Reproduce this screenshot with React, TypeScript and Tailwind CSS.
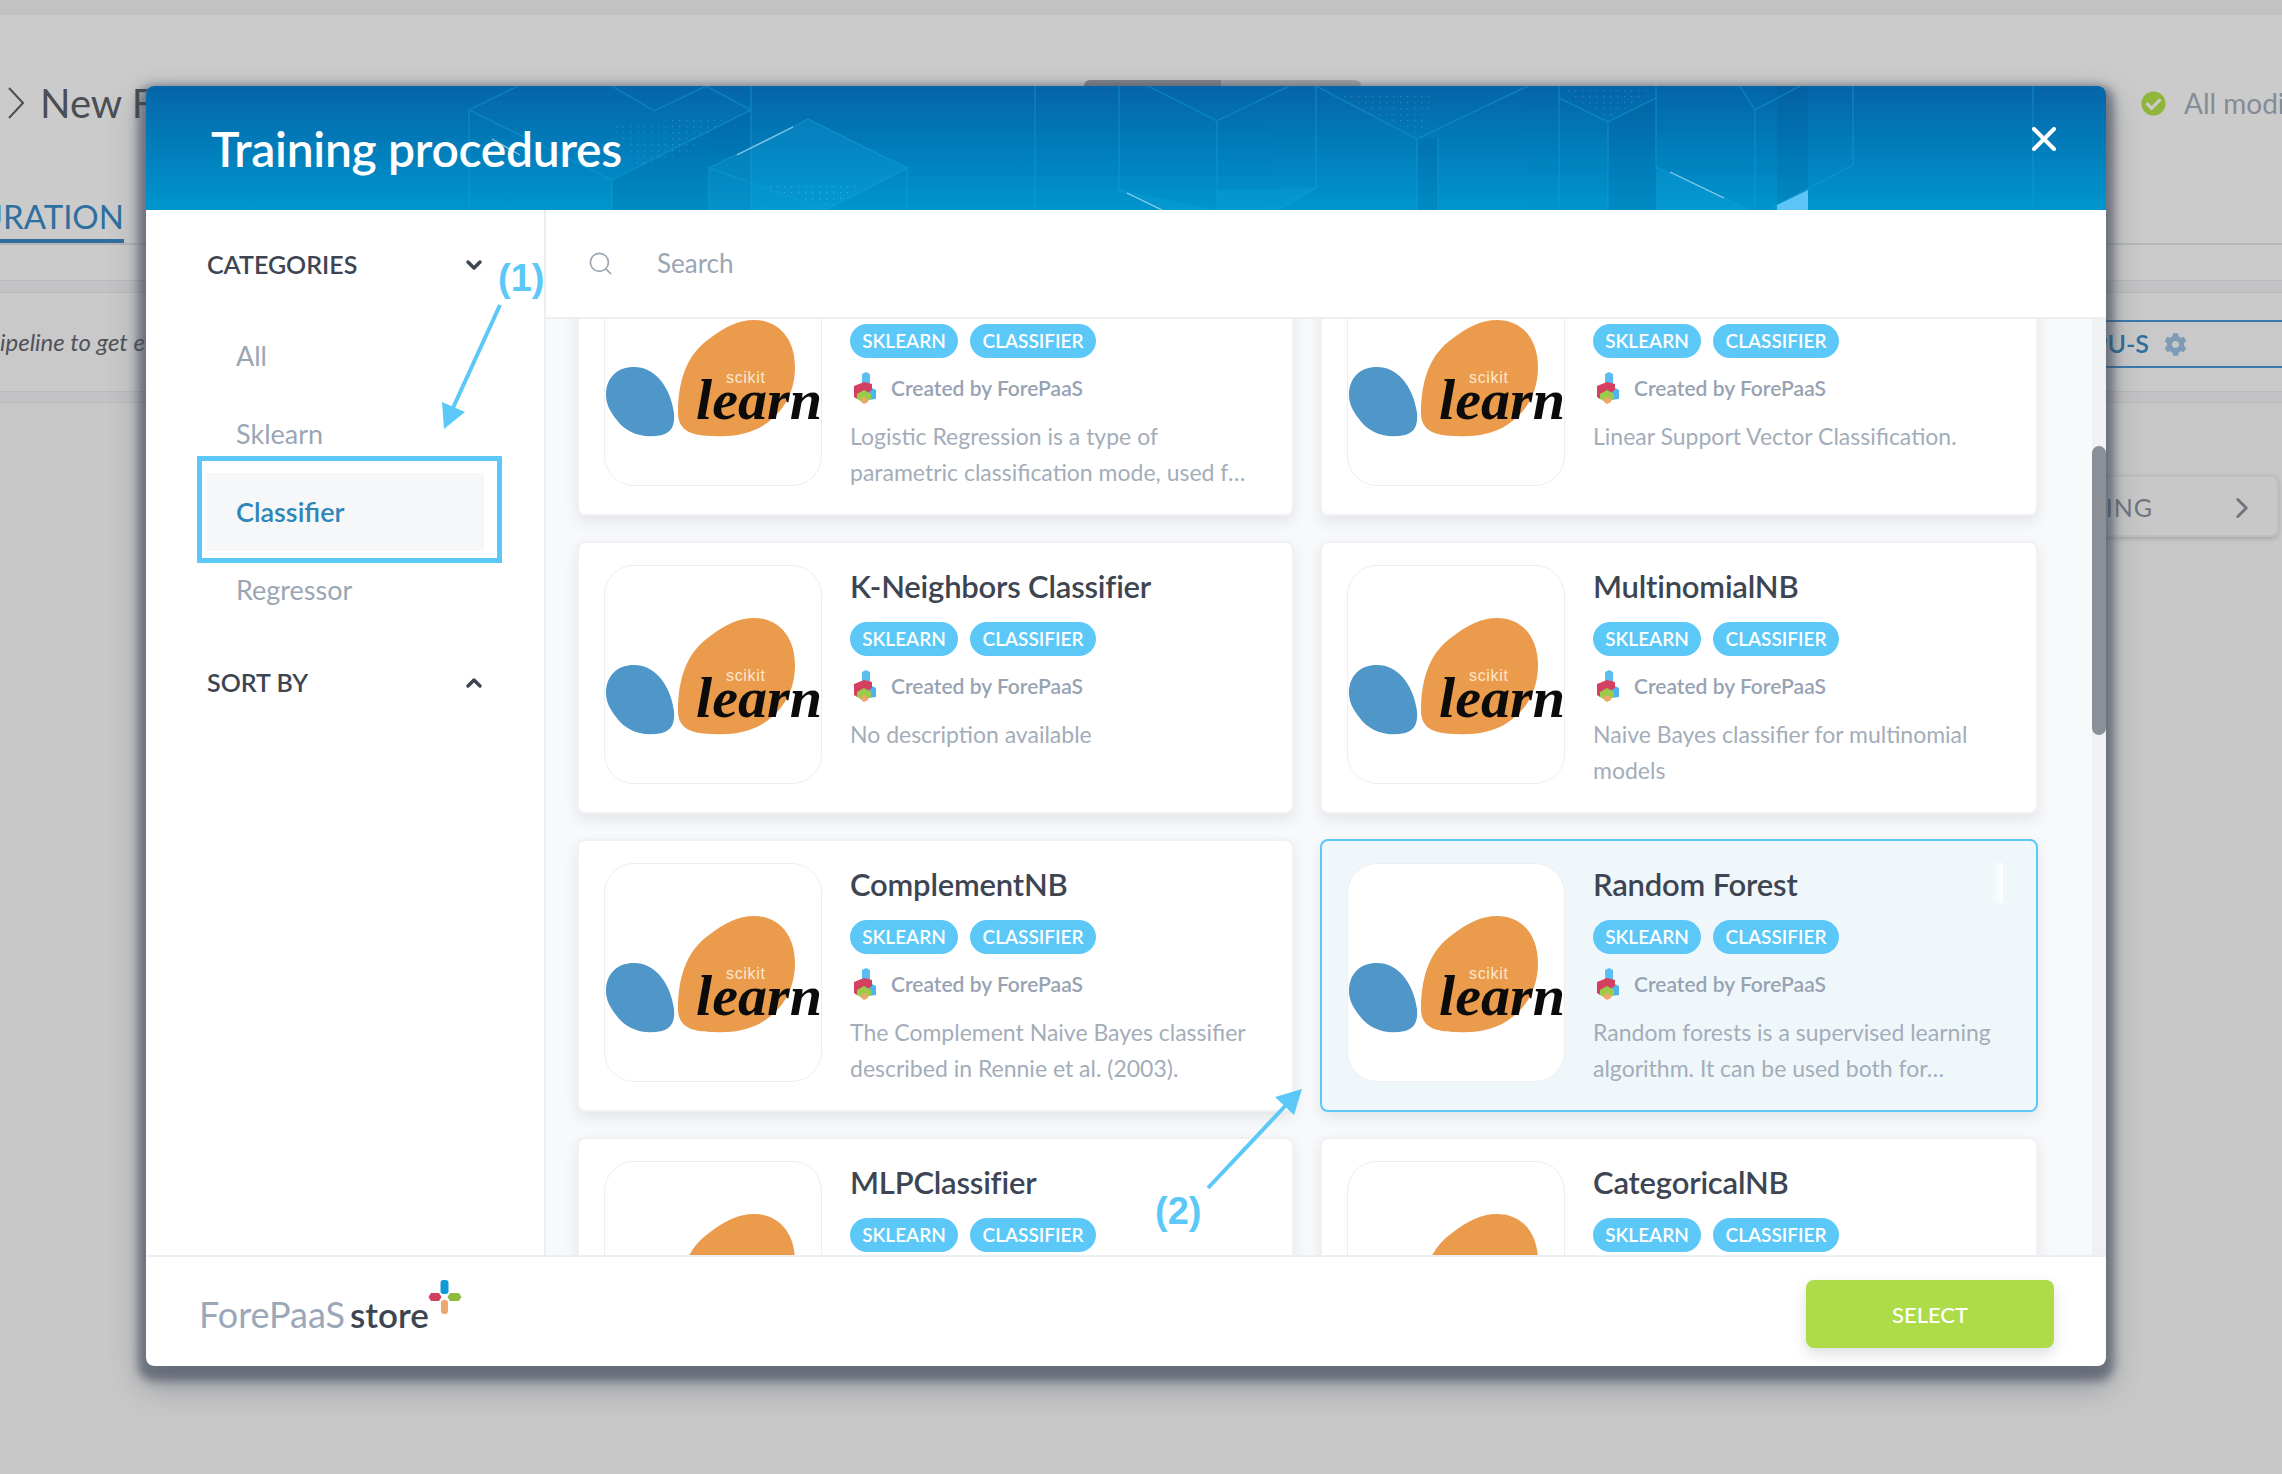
import { Search, ChevronDown, ChevronUp, ChevronRight } from "lucide-react";
import { FaCheckCircle, FaCog } from "react-icons/fa";

const cards = [
  { title: "Logistic Regression", desc: ["Logistic Regression is a type of", "parametric classification mode, used f…"] },
  { title: "Linear SVC", desc: ["Linear Support Vector Classification."] },
  { title: "K-Neighbors Classifier", desc: ["No description available"] },
  { title: "MultinomialNB", desc: ["Naive Bayes classifier for multinomial", "models"] },
  { title: "ComplementNB", desc: ["The Complement Naive Bayes classifier", "described in Rennie et al. (2003)."] },
  { title: "Random Forest", desc: ["Random forests is a supervised learning", "algorithm. It can be used both for…"], selected: true },
  { title: "MLPClassifier", desc: [] },
  { title: "CategoricalNB", desc: [] },
];

const SklearnLogo = () => (
  <svg width="218" height="219" viewBox="0 0 218 219" className="block">
    <path d="M2 128C2 110 14 100 30 100C50 100 66 118 70 146C71 158 68 165 58 168C38 172 22 166 12 152C5 143 2 136 2 128Z" fill="#5097c9" />
    <path d="M74 146C74 110 85 86 105 72C120 60 135 53 150 53C175 53 191 72 191 100C191 125 180 145 160 158C145 168 125 170 110 169C90 169 74 165 74 146Z" fill="#ea9c4c" />
    <text x="122" y="116" fontSize="16" fill="#fbe6d0" textLength="39" fontFamily="Liberation Sans, sans-serif">scikit</text>
    <text x="92" y="152" fontSize="58" fontStyle="italic" fontWeight="700" fill="#0b0b0b" textLength="126" lengthAdjust="spacingAndGlyphs" fontFamily="Liberation Serif, serif">learn</text>
  </svg>
);

const PaasIcon = () => (
  <svg width="23" height="32" viewBox="0 0 23 32">
    <polygon points="8,2 12,0 16,2 16,13 8,13" fill="#5cbdf0" />
    <polygon points="14,18 18,16 22,18 22,27 14,28" fill="#4fb4ec" />
    <polygon points="0,14 10,10 18,12 18,18 12,22 3,27 0,25" fill="#d4405f" />
    <polygon points="3,22 10,18 17,22 17,27 10,31 3,27" fill="#9ccb4a" />
    <polygon points="7,27 10,25 14,27 14,30 10,32 7,30" fill="#eda76a" />
  </svg>
);

const StoreIcon = () => (
  <svg width="34" height="34" viewBox="0 0 34 34" className="-ml-px">
    <rect x="12.5" y="0" width="8" height="14" rx="3" fill="#0f9ad6" />
    <polygon points="3,13 11,13 13.5,17 11,21 3,21 0.5,17" fill="#d33f5e" />
    <polygon points="22,13 31,13 33.5,17 31,21 22,21 19.5,17" fill="#8fbb3f" />
    <rect x="13" y="20" width="7" height="14" rx="3" fill="#efa86c" />
  </svg>
);

const HeaderArt = () => (
  <svg width="1960" height="124" viewBox="146 86 1960 124" className="absolute inset-0">
    <defs>
      <pattern id="dots" width="7" height="6" patternUnits="userSpaceOnUse">
        <rect width="1.2" height="1.2" fill="#ffffff" opacity="0.45" />
      </pattern>
    </defs>
    <g fill="#03447f" opacity="0.12">
      <polygon points="612,180 751,110 751,210 612,210" />
      <rect x="1417" y="139" width="21" height="71" />
      <polygon points="1608,122 1656,98 1656,210 1608,210" />
      <rect x="1777" y="86" width="31" height="124" />
    </g>
    <g fill="#19b2ea" opacity="0.18">
      <polygon points="808,119 907,168 826,210 709,168" />
      <polygon points="709,168 826,210 709,210" />
      <polygon points="1119,190 1217,210 1162,210" />
      <polygon points="1217,190 1316,188 1278,210 1217,210" />
      <polygon points="1656,167 1750,210 1656,210" />
    </g>
    <g fill="none" stroke="#1aa3dc" strokeOpacity="0.4" strokeWidth="1.5">
      <path d="M518 86L469 110L612 180L751 110L706 86L654 111L612 86M469 110V210M612 180V210M751 86V210" />
      <path d="M709 210V168L808 119L907 168V210M709 168L826 210L907 168" />
      <path d="M1035 86V210" />
      <path d="M1119 86V190L1162 210M1148 86L1217 121L1289 86M1217 121V210M1316 86V188L1278 210" />
      <path d="M1316 86L1417 139L1528 86M1417 139V210M1438 139V210" />
      <path d="M1559 86V210M1559 98L1608 122L1656 98M1608 122V210M1656 86V167L1750 210" />
      <path d="M1755 110V210M1853 86V165L1768 210M1740 86L1755 110L1800 86" />
      <path d="M2033 86V210" />
    </g>
    <polygon points="1777,205 1808,190 1808,210 1777,210" fill="#5cc4f6" />
    <g stroke="#ffffff" strokeOpacity="0.55" strokeWidth="1.2">
      <path d="M492 139L520 155" />
      <path d="M737 155L793 127" />
      <path d="M1127 193L1162 210" />
      <path d="M1670 172L1724 198" />
    </g>
    <polygon points="612,125 735,115 690,150 640,170" fill="url(#dots)" opacity="0.4" />
    <polygon points="1330,92 1436,92 1420,136" fill="url(#dots)" opacity="0.4" />
    <polygon points="1562,90 1652,90 1608,120" fill="url(#dots)" opacity="0.4" />
    <polygon points="760,185 860,185 830,208" fill="url(#dots)" opacity="0.5" />
  </svg>
);

const Card = ({ title, desc, selected }: { title: string; desc: string[]; selected?: boolean }) => (
  <div className={`h-[273px] rounded-lg border-2 pl-[25px] pt-[22px] flex shadow-[0_6px_14px_rgba(50,60,80,0.1)] ${selected ? "border-[#5cc8f8] bg-[#f0f7fb]" : "border-[#f0f1f4] bg-white"}`}>
    <div className="w-[218px] h-[219px] rounded-[30px] border border-[#eceef1] bg-white overflow-hidden shrink-0">
      <div className="-m-px">
        <SklearnLogo />
      </div>
    </div>
    <div className="ml-[28px] flex-1 relative">
      <div className="h-[42px] leading-[42px] text-[31px] font-semibold text-[#3e4552] tracking-[-0.2px]">{title}</div>
      <div className="flex gap-[12px] mt-[15px]">
        <span className="h-[34px] w-[108px] rounded-full bg-[#5cc8f8] text-white text-[19px] font-semibold flex items-center justify-center">SKLEARN</span>
        <span className="h-[34px] w-[126px] rounded-full bg-[#5cc8f8] text-white text-[19px] font-semibold flex items-center justify-center">CLASSIFIER</span>
      </div>
      <div className="flex items-center mt-[14px] ml-[4px] h-[32px]">
        <PaasIcon />
        <span className="ml-[14px] text-[21px] font-semibold text-[#97a3b3]">Created by ForePaaS</span>
      </div>
      <div className="mt-[14px] text-[23px] leading-[36px] text-[#a3adba] whitespace-nowrap">
        {desc.map((line) => (
          <div key={line}>{line}</div>
        ))}
      </div>
      {selected && <div className="absolute right-[33px] top-0 w-[12px] h-[40px] bg-gradient-to-r from-transparent to-white" />}
    </div>
  </div>
);

export default function App() {
  return (
    <div className="relative w-[2282px] h-[1474px] overflow-hidden bg-[#c8c8c8] font-[Lato,sans-serif]">
      {/* page behind the modal */}
      <div className="h-[15px] bg-[#c2c2c2]" />
      <div className="h-[176px] flex items-center bg-[#cbcbcb]">
        <div className="w-[1084px] shrink-0 flex items-center text-[#4a4e55] whitespace-nowrap overflow-hidden">
          <svg width="18" height="34" viewBox="0 0 18 34" className="ml-[7px] shrink-0">
            <path d="M2 2L16 17L2 32" fill="none" stroke="#4a4e55" strokeWidth="2" />
          </svg>
          <span className="text-[40px] ml-[15px]">New Forecast model</span>
        </div>
        <div className="self-start mt-[65px] w-[277px] h-[6px] shrink-0 flex rounded-t-lg overflow-hidden">
          <div className="w-[137px] bg-[#83878d]" />
          <div className="flex-1 bg-[#a5a7ab]" />
        </div>
        <div className="ml-[780px] shrink-0 flex items-center whitespace-nowrap text-[28px] text-[#858c96]">
          <FaCheckCircle size={25} className="text-[#8fb63b]" />
          <span className="ml-[18px]">All modifications</span>
        </div>
      </div>
      <div className="h-[54px] border-b-2 border-[#b5b7ba] bg-[#cbcbcb]">
        <div className="h-[52px] w-[124px] border-b-[4px] border-[#2f6f9f] flex justify-end overflow-hidden">
          <span className="shrink-0 text-[33px] leading-[50px] text-[#2f6f9f]">CONFIGURATION</span>
        </div>
      </div>
      <div className="h-[35px] bg-[#cbcbcb]" />
      <div className="h-[13px] bg-[#c3c3c5] border-y border-[#b8babd]" />
      <div className="h-[98px] pt-[4px] flex items-center justify-between bg-[#c9c9c9]">
        <span className="-mt-[4px] text-[24px] italic text-[#4f5359] whitespace-nowrap">ipeline to get everything</span>
        <div className="w-[400px] h-[48px] border-y-2 border-[#3a79a8] flex items-center justify-end pr-[95px] text-[25px] font-semibold text-[#2f6f9f]">
          CPU-S
          <FaCog size={23} className="ml-[15px] text-[#7f9ab5]" />
        </div>
      </div>
      <div className="h-[12px] bg-[#c3c3c5] border-y border-[#b8babd]" />
      <div className="flex justify-end pt-[72px] pr-[3px]">
        <div className="w-[400px] h-[62px] rounded-lg border-2 border-[#bdbfc1] flex items-center justify-end text-[25px] tracking-[1px] text-[#6f757d] shadow-[0_2px_4px_rgba(90,95,100,0.3)]">
          <span className="mt-[3px]">TRAINING</span>
          <ChevronRight size={34} strokeWidth={2} className="mt-[3px] ml-[72px] mr-[18px] text-[#6f757d]" />
        </div>
      </div>

      {/* modal */}
      <div className="absolute left-[146px] top-[86px] w-[1960px] h-[1280px] rounded-lg bg-white flex flex-col overflow-hidden">
        <div className="relative h-[124px] shrink-0 bg-gradient-to-b from-[#0565a8] to-[#0096cd]">
          <HeaderArt />
          <div className="relative h-full flex items-center justify-between pl-[65px] pr-[50px]">
            <h1 className="text-[48px] font-semibold text-white mt-[2px] tracking-[-0.3px]">Training procedures</h1>
            <svg width="24" height="24" viewBox="0 0 24 24" className="-mt-[18px]">
              <path d="M2 2L22 22M22 2L2 22" stroke="#ffffff" strokeWidth="4" strokeLinecap="round" />
            </svg>
          </div>
        </div>
        <div className="flex-1 flex min-h-0">
          <aside className="w-[400px] shrink-0 border-r-2 border-[#eceef2] pl-[61px] pt-[35px]">
            <div className="w-[277px]">
              <div className="h-[40px] flex items-center justify-between text-[25px] font-semibold text-[#3e4552]">
                CATEGORIES
                <ChevronDown size={24} strokeWidth={3.5} className="-mr-[2px]" />
              </div>
              <div className="mt-[32px] text-[27px] text-[#9aa6b4]">
                <div className="h-[78px] flex items-center pl-[29px]">All</div>
                <div className="h-[78px] flex items-center pl-[29px]">Sklearn</div>
                <div className="h-[78px] flex items-center pl-[29px] bg-[#f6f7f8] text-[#2f86b9] font-semibold">Classifier</div>
                <div className="h-[78px] flex items-center pl-[29px]">Regressor</div>
              </div>
              <div className="mt-[34px] h-[40px] flex items-center justify-between text-[25px] font-semibold text-[#3e4552]">
                SORT BY
                <ChevronUp size={24} strokeWidth={3.5} className="-mr-[2px]" />
              </div>
            </div>
          </aside>
          <div className="flex-1 flex flex-col min-w-0">
            <div className="h-[109px] shrink-0 border-b-2 border-[#eceef2] flex items-center pl-[41px] text-[#9aa6b4]">
              <Search size={27} strokeWidth={1.5} />
              <span className="ml-[43px] text-[26px]">Search</span>
            </div>
            <div className="flex-1 relative overflow-hidden bg-[#f8f9fa]">
              <div className="-mt-[76px] pl-[31px] grid grid-cols-[717px_718px] gap-x-[26px] gap-y-[25px]">
                {cards.map((c) => (
                  <Card key={c.title} {...c} />
                ))}
              </div>
              <div className="absolute right-0 top-0 bottom-0 w-[14px] bg-[#f0f1f3]">
                <div className="mt-[127px] h-[289px] rounded-t-full rounded-b-full bg-[#8b9097]" />
              </div>
            </div>
          </div>
        </div>
        <div className="h-[111px] shrink-0 border-t-2 border-[#eceef2] flex items-start justify-between pt-[23px] pl-[53px] pr-[52px]">
          <div className="flex items-start">
            <div className="mt-[14px] text-[36px] leading-[40px] whitespace-nowrap">
              <span className="text-[#9aa8b8]">ForePaaS</span>
              <span className="ml-[5px] text-[35px] text-[#3e4552] font-semibold">store</span>
            </div>
            <StoreIcon />
          </div>
          <button className="w-[248px] h-[68px] rounded-lg bg-[#addc48] text-white text-[22px] font-medium shadow-[0_6px_14px_rgba(80,90,100,0.2)]">SELECT</button>
        </div>
      </div>
      {/* modal shadow sits on its own layer below the modal's edge */}
      <div className="absolute left-[146px] top-[86px] w-[1960px] h-[1280px] rounded-lg pointer-events-none shadow-[0_7px_8px_8px_rgba(60,70,85,0.55),0_16px_30px_6px_rgba(60,70,85,0.35)]" />

      {/* annotations */}
      <div className="absolute left-[197px] top-[456px] w-[305px] h-[107px] border-[5px] border-[#5cc8f8]" />
      <svg width="2282" height="1474" viewBox="0 0 2282 1474" className="absolute inset-0 pointer-events-none">
        <path d="M500 305L452 410" stroke="#5cc8f8" strokeWidth="4" fill="none" />
        <polygon points="444,429 442,402 465,412" fill="#5cc8f8" />
        <path d="M1208 1188L1288 1103" stroke="#5cc8f8" strokeWidth="4" fill="none" />
        <polygon points="1302,1089 1294,1115 1275,1097" fill="#5cc8f8" />
      </svg>
      <span className="absolute left-[498px] top-[256px] text-[38px] leading-[44px] font-bold text-[#5cc8f8] font-['Liberation_Sans',sans-serif]">(1)</span>
      <span className="absolute left-[1155px] top-[1189px] text-[38px] leading-[44px] font-bold text-[#5cc8f8] font-['Liberation_Sans',sans-serif]">(2)</span>
    </div>
  );
}
